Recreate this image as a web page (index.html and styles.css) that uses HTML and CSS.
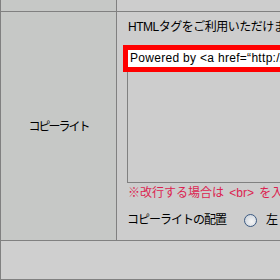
FILE: index.html
```html
<!DOCTYPE html>
<html lang="ja">
<head>
    <meta charset="UTF-8">
    <title>コピーライト設定</title>
    <link rel="stylesheet" href="styles.css">
</head>
<body>
    <div class="form-table">
        <div class="cell head-left"></div>
        <div class="cell head-right"></div>

        <div class="cell label">コピーライト</div>
        <div class="cell field">
            <p class="hint">HTMLタグをご利用いただけます。</p>
            <div class="editor">
                <div class="textarea"></div>
                <div class="highlight">Powered by &lt;a href=“http://www.example.jp/”&gt;</div>
            </div>
            <p class="notice">※改行する場合は &lt;br&gt; を入力してください。</p>
            <div class="option">
                <span class="option-label">コピーライトの配置</span>
                <span class="radio"></span>
                <span>左</span>
            </div>
        </div>

        <div class="cell foot"></div>
    </div>
</body>
</html>
```

FILE: styles.css
```css
body {
    margin: 0;
    background-color: #cecece;
    font-family: "Liberation Sans", "Noto Sans CJK JP", sans-serif;
    font-size: 12px;
    color: #000;
    overflow: hidden;
    width: 280px;
    height: 280px;
}

.form-table {
    display: grid;
    grid-template-columns: 116px 1fr;
    grid-template-rows: 12px 229px 39px;
    border-left: 1px solid #808080;
    width: 400px;
}

.cell {
    border-bottom: 1px solid #808080;
    box-sizing: border-box;
}

.head-left,
.label {
    background-color: #c6c8c6;
    border-right: 1px solid #808080;
}

.head-right,
.field {
    background-color: #cdcdcd;
}

.label {
    display: flex;
    align-items: center;
    justify-content: center;
    padding-top: 2px;
    line-height: 16px;
    letter-spacing: -2px;
}

.field {
    padding: 7px 0 0 10px;
}

.hint {
    margin: 0;
    line-height: 16px;
    padding-left: 1px;
    letter-spacing: -0.5px;
    white-space: nowrap;
}

.editor {
    position: relative;
    margin-top: 12px;
}

.textarea {
    height: 136px;
    width: 300px;
    border: 1px solid #808080;
    box-sizing: border-box;
}

.highlight {
    position: absolute;
    left: -4px;
    top: -2px;
    width: 300px;
    height: 17px;
    border: 5px solid #ff0000;
    background-color: #fff;
    padding-left: 2px;
    line-height: 17px;
    letter-spacing: 0.3px;
    white-space: nowrap;
}

.notice {
    margin: 2px 0 0;
    line-height: 16px;
    color: #dc1e50;
    padding-left: 1px;
    word-spacing: 2px;
    white-space: nowrap;
}

.option {
    display: flex;
    align-items: center;
    margin-top: 11px;
    line-height: 16px;
    white-space: nowrap;
}

.option-label {
    letter-spacing: -1px;
}

.radio {
    width: 11px;
    height: 11px;
    border: 1px solid #3c5a82;
    border-radius: 50%;
    background: radial-gradient(circle at 60% 60%, #f6f6f6, #c4ccd6);
    margin: 0 9px 0 18px;
}

.foot {
    grid-column: 1 / 3;
    background-color: #cfcfcf;
}
```
